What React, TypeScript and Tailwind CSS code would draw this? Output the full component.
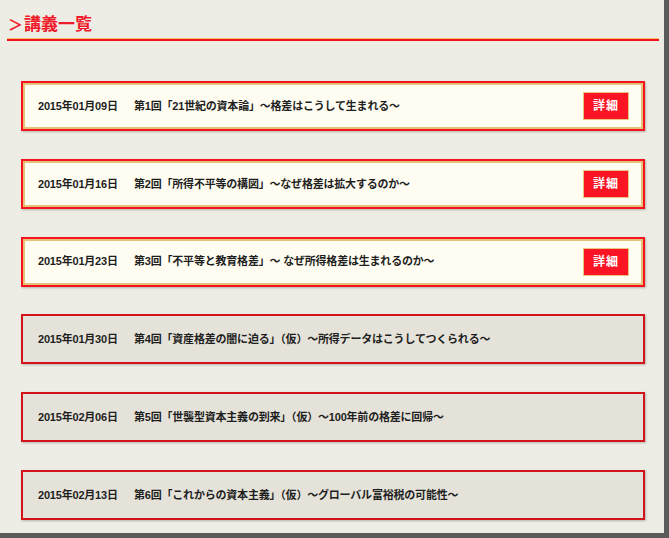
import React from 'react';

type Lecture = {
  date: string;
  title: string;
  active: boolean;
};

const lectures: Lecture[] = [
  { date: '2015年01月09日', title: '第1回「21世紀の資本論」～格差はこうして生まれる～', active: true },
  { date: '2015年01月16日', title: '第2回「所得不平等の構図」～なぜ格差は拡大するのか～', active: true },
  { date: '2015年01月23日', title: '第3回「不平等と教育格差」～ なぜ所得格差は生まれるのか～', active: true },
  { date: '2015年01月30日', title: '第4回「資産格差の闇に迫る」（仮）～所得データはこうしてつくられる～', active: false },
  { date: '2015年02月06日', title: '第5回「世襲型資本主義の到来」（仮）～100年前の格差に回帰～', active: false },
  { date: '2015年02月13日', title: '第6回「これからの資本主義」（仮）～グローバル富裕税の可能性～', active: false },
];

function LectureRow({ lecture }: { lecture: Lecture }) {
  if (lecture.active) {
    return (
      <div className="h-[50px] border-2 border-[#f5141e] shadow-[1px_1px_2px_rgba(0,0,0,0.25)]">
        <div className="h-full border-2 border-[#e4c27a] bg-[#fffdf1] flex items-center pl-[13px] pr-[12px]">
          <span className="w-[96px] shrink-0">{lecture.date}</span>
          <span className="flex-1">{lecture.title}</span>
          <button className="w-[46px] h-[28px] border border-[#e8c680] bg-[#fb1424] text-white text-[12px] font-bold tracking-[1px]">
            詳細
          </button>
        </div>
      </div>
    );
  }
  return (
    <div className="h-[50px] border-2 border-[#d2131d] bg-[#e5e3d9] flex items-center pl-[15px] shadow-[1px_1px_2px_rgba(0,0,0,0.25)]">
      <span className="w-[96px] shrink-0">{lecture.date}</span>
      <span>{lecture.title}</span>
    </div>
  );
}

export default function App() {
  return (
    <div
      className="w-[669px] h-[538px] overflow-hidden bg-[#eeede5] border-r-[5px] border-b-[5px] border-[#5b5b5b] text-[#1e1e1e] text-[11px] font-bold tracking-[-0.2px]"
      style={{ fontFamily: '"Liberation Sans", "Noto Sans CJK JP", sans-serif' }}
    >
      <div className="pl-[7px] pr-[5px]">
        <h2 className="h-[38px] pt-[12px] pl-[1px] text-[17px] leading-[22px] font-bold text-[#ef1a2a] flex items-center tracking-normal">
          <span className="w-[16px] text-[15px]">＞</span>
          <span>講義一覧</span>
        </h2>
        <div className="border-t border-[#efc46a] h-[3px] bg-[#f3121c]" />
      </div>
      <div className="pl-[21px] pr-[19px] pt-[40px] flex flex-col gap-[27.8px]">
        {lectures.map((l) => (
          <LectureRow key={l.date} lecture={l} />
        ))}
      </div>
    </div>
  );
}
